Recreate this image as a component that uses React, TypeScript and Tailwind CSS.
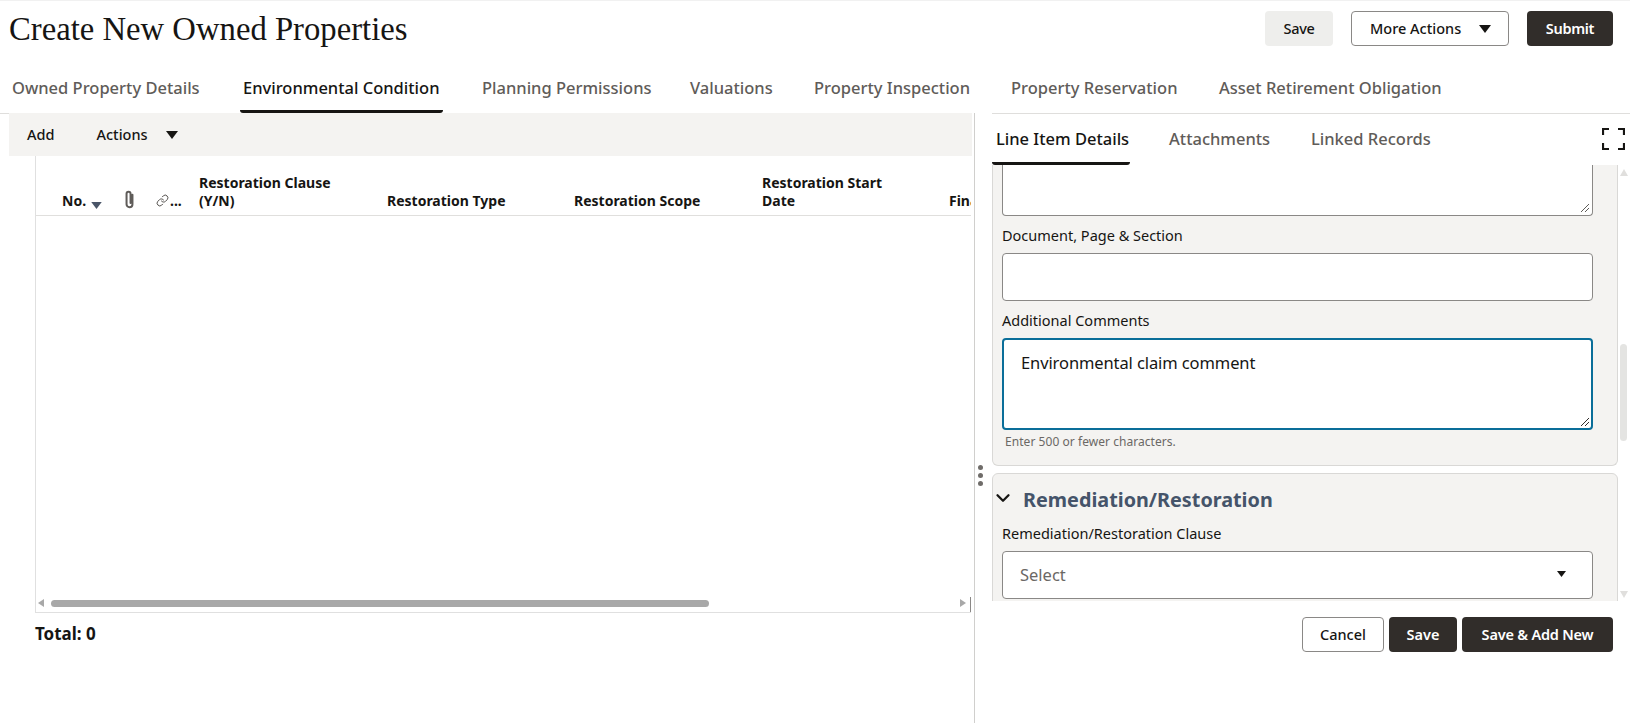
import React from "react";
import { ChevronDown, Link } from "lucide-react";

const mainTabs = [
  { label: "Owned Property Details", width: "w-[231px]" },
  { label: "Environmental Condition", width: "w-[239px]", active: true },
  { label: "Planning Permissions", width: "w-[208px]" },
  { label: "Valuations", width: "w-[124px]" },
  { label: "Property Inspection", width: "w-[197px]" },
  { label: "Property Reservation", width: "w-[208px]" },
  { label: "Asset Retirement Obligation", width: "w-[240px]" },
];

const Caret = ({ className }: { className: string }) => (
  <svg viewBox="0 0 12 8" className={className} fill="currentColor">
    <path d="M0 0h12L6 8z" />
  </svg>
);

const Label = ({ children }: { children: React.ReactNode }) => (
  <div className="h-[37px] pt-[10px] text-[14.5px] leading-[19px] text-[#161513]">{children}</div>
);

export default function App() {
  return (
    <div className="h-[723px] w-[1630px] overflow-hidden bg-white flex flex-col border-t border-[#f1f1f1] font-['Noto_Sans',sans-serif] text-[#161513]">
      {/* page header */}
      <div className="h-[69px] shrink-0 flex items-start justify-between pl-[9px] pr-[17px] pt-[10px]">
        <h1 className="font-['Liberation_Serif',serif] text-[32.7px] leading-[36px] text-[#161513]">Create New Owned Properties</h1>
        <div className="flex items-center gap-[18px] text-[14.5px]">
          <button className="h-[35px] w-[68px] rounded bg-[#eeeeec] font-medium tracking-[-0.3px]">Save</button>
          <button className="h-[35px] w-[158px] rounded border border-[#8a8886] flex items-center pl-[18px] gap-[17px] font-medium">
            More Actions
            <Caret className="w-[14px] h-[8px]" />
          </button>
          <button className="h-[35px] w-[86px] rounded bg-[#312d2a] text-white font-semibold tracking-[-0.3px]">Submit</button>
        </div>
      </div>

      {/* main tabs */}
      <div className="h-[43px] shrink-0 flex pl-[9px] text-[16.5px] font-medium text-[#5f5c59]">
        {mainTabs.map((t) => (
          <div key={t.label} className={`${t.width} shrink-0`}>
            <div className={`inline-flex h-[43px] px-[3px] items-center pb-[3px] border-b-[3px] rounded-b-[3px] ${t.active ? "text-[#161513] border-[#161513]" : "border-transparent"}`}>
              {t.label}
            </div>
          </div>
        ))}
      </div>

      <div className="flex-1 flex min-h-0 relative">
        {/* left pane */}
        <div className="w-[975px] shrink-0 border-r border-[#d0cfcd] flex flex-col">
          <div className="h-px w-[9px] bg-[#dfdedc] shrink-0" />
          <div className="h-[43px] -mt-px ml-[9px] mr-[2px] shrink-0 bg-[#f4f3f1] flex items-center text-[14.5px] font-medium">
            <span className="ml-[18px]">Add</span>
            <span className="ml-[42px]">Actions</span>
            <Caret className="w-[14px] h-[8px] ml-[17px]" />
          </div>
          <div className="ml-[35px] w-[936px] h-[457px] shrink-0 border-l border-b border-[#e0e0e0] relative overflow-hidden flex flex-col">
            <div className="h-[60px] shrink-0 border-b border-[#e0dfdd] flex items-end pb-[5px] text-[14px] leading-[18px] font-bold text-[#161513] whitespace-nowrap">
              <div className="w-[88px] pl-[26px] flex items-end shrink-0">
                No.
                <Caret className="w-[13px] h-[7px] mb-[1px] ml-[4px] text-[#4a5568]" />
              </div>
              <div className="w-[32px] shrink-0 pb-[1px]">
                <svg viewBox="0 0 10 18" className="w-[11px] h-[19px]" fill="none" stroke="#5f5c59" strokeWidth="1.9" strokeLinecap="round">
                  <path d="M7.8 4.5v9a2.8 2.8 0 0 1-5.6 0V3.6a1.9 1.9 0 0 1 3.8 0v8.6" />
                </svg>
              </div>
              <div className="w-[43px] shrink-0 flex items-end">
                <Link className="w-[13px] h-[13px] mb-[3px] text-[#312d2a]" strokeWidth={1.5} />
                <span className="ml-[1px]">...</span>
              </div>
              <div className="w-[188px] shrink-0">Restoration Clause<br />(Y/N)</div>
              <div className="w-[187px] shrink-0">Restoration Type</div>
              <div className="w-[188px] shrink-0">Restoration Scope</div>
              <div className="w-[187px] shrink-0">Restoration Start<br />Date</div>
              <div className="shrink-0">Final</div>
            </div>
            <div className="flex-1" />
            {/* horizontal scrollbar */}
            <div className="h-[12px] mb-[3px] shrink-0 flex items-center pl-[2px]">
              <svg viewBox="0 0 6 8" className="w-[6px] h-[8px]" fill="#a8a8a8"><path d="M6 0v8L0 4z" /></svg>
              <div className="w-[658px] h-[7px] rounded-full bg-[#a8a8a8] ml-[7px]" />
              <svg viewBox="0 0 6 8" className="w-[6px] h-[8px] ml-[251px]" fill="#a8a8a8"><path d="M0 0v8l6-4z" /></svg>
            </div>
            <div className="absolute right-0 bottom-0 w-px h-[15px] bg-[#8a8886]" />
          </div>
          <div className="ml-[35px] mt-[10px] text-[17px] leading-[22px] font-bold">Total: 0</div>
        </div>

        {/* splitter handle */}
        <div className="absolute left-[978px] top-[352px] flex flex-col gap-[3px]">
          <span className="w-[5px] h-[5px] rounded-full bg-[#6f6c69]" />
          <span className="w-[5px] h-[5px] rounded-full bg-[#6f6c69]" />
          <span className="w-[5px] h-[5px] rounded-full bg-[#6f6c69]" />
        </div>

        {/* right pane */}
        <div className="flex-1 min-w-0 ml-[17px] border-t border-[#dfdedc] flex flex-col">
          <div className="h-[51px] shrink-0 flex text-[16.5px] font-medium text-[#5f5c59] relative">
            <div className="w-[138px] h-[51px] pl-[4px] pt-[2px] flex items-center text-[#161513] border-b-[3px] border-[#161513] rounded-b-[3px]">Line Item Details</div>
            <div className="ml-[39px] h-[51px] flex items-center pb-[1px] w-[142px]">Attachments</div>
            <div className="h-[51px] flex items-center pb-[1px]">Linked Records</div>
            <svg viewBox="0 0 23 22" className="absolute left-[610px] top-[14px] w-[23px] h-[22px]" fill="none" stroke="#161513" strokeWidth="2.2">
              <path d="M1 7V1h6M16 1h6v6M1 15v6h6M16 21h6v-6" />
            </svg>
          </div>

          <div className="h-[436px] shrink-0 relative overflow-hidden">
            <div className="w-[626px] h-[301px] rounded-b-[6px] border-l border-r border-b border-[#d9d8d6] bg-[#f4f3f1] pl-[9px] pr-[24px]">
              <div className="h-[51px] bg-white border-l border-r border-b border-[#8a8886] rounded-b relative">
                <svg viewBox="0 0 10 10" className="absolute right-[2px] bottom-[2px] w-[10px] h-[10px]" stroke="#5f5c59" strokeWidth="1"><path d="M1 9l8-8M5 9l4-4" /></svg>
              </div>
              <Label>Document, Page &amp; Section</Label>
              <div className="h-[48px] bg-white border border-[#8a8886] rounded" />
              <Label>Additional Comments</Label>
              <div className="h-[92px] bg-white border-2 border-[#0a6e99] rounded relative pl-[17px] pt-[12px] text-[16.5px] leading-[22px] tracking-[-0.1px] text-[#161513]">
                Environmental claim comment
                <svg viewBox="0 0 10 10" className="absolute right-[1px] bottom-[1px] w-[10px] h-[10px]" stroke="#312d2a" strokeWidth="1"><path d="M1 9l8-8M5 9l4-4" /></svg>
              </div>
              <div className="mt-[4px] pl-[3px] text-[12px] leading-[16px] tracking-[0.05px] text-[#6b6865]">Enter 500 or fewer characters.</div>
            </div>

            <div className="mt-[7px] w-[626px] h-[140px] rounded-t-[6px] border border-[#d9d8d6] bg-[#f4f3f1] pl-[9px] pr-[24px] pt-[12px]">
              <div className="flex items-center h-[28px] -ml-[2px]">
                <ChevronDown className="w-[22px] h-[22px] -ml-[8px] mb-[5px] text-[#161513]" strokeWidth={2.5} />
                <span className="ml-[9px] text-[19.8px] leading-[26px] font-bold text-[#45546a]">Remediation/Restoration</span>
              </div>
              <div className="h-[41px] pt-[10px] text-[14.5px] leading-[19px]">Remediation/Restoration Clause</div>
              <div className="-mt-[4px] h-[48px] bg-white border border-[#8a8886] rounded flex items-center justify-between pl-[17px] pr-[25px] pt-[1px] text-[16.5px] text-[#6b6865]">
                Select
                <Caret className="w-[11px] h-[6px] text-[#161513] mb-[4px]" />
              </div>
            </div>

            {/* vertical scrollbar */}
            <div className="absolute left-[628px] top-[179px] w-[7px] h-[97px] rounded-full bg-[#e4e4e2]" />
            <svg viewBox="0 0 8 7" className="absolute left-[628px] top-[4px] w-[8px] h-[7px]" fill="#e0dfdd"><path d="M4 0l4 7H0z" /></svg>
            <svg viewBox="0 0 8 7" className="absolute left-[628px] top-[426px] w-[8px] h-[7px]" fill="#e0dfdd"><path d="M0 0h8L4 7z" /></svg>
          </div>

          <div className="flex justify-end gap-[5px] pr-[17px] mt-[16px] text-[14.5px]">
            <button className="h-[35px] w-[82px] rounded border border-[#8a8886] font-medium">Cancel</button>
            <button className="h-[35px] w-[68px] rounded bg-[#312d2a] text-white font-semibold">Save</button>
            <button className="h-[35px] w-[151px] rounded bg-[#312d2a] text-white font-semibold tracking-[-0.2px]">Save &amp; Add New</button>
          </div>
        </div>
      </div>
    </div>
  );
}
